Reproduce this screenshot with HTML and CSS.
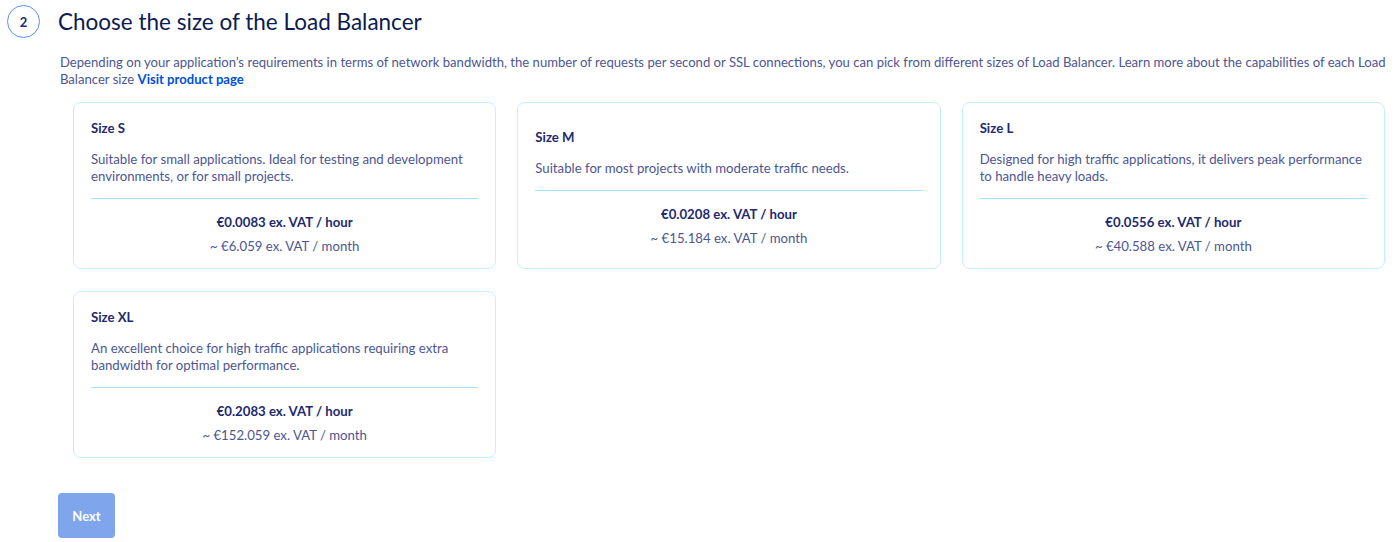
FILE: index.html
```html
<!DOCTYPE html>
<html lang="en">
<head>
    <meta charset="UTF-8">
    <meta name="viewport" content="width=device-width, initial-scale=1.0">
    <title>Choose the size of the Load Balancer</title>
    <link rel="stylesheet" href="styles.css">
</head>
<body>

    <div class="step">
        <div class="step-header">
            <span class="step-number">2</span>
            <h2>Choose the size of the Load Balancer</h2>
        </div>

        <div class="step-body">
            <p class="intro">
                Depending on your application’s requirements in terms of network bandwidth, the number of requests per second or SSL connections, you can pick from different sizes of Load Balancer. Learn more about the capabilities of each Load Balancer size <a href="#">Visit product page</a>
            </p>

            <div class="sizes">
                <div class="size-card">
                    <div class="size-name">Size S</div>
                    <div class="size-desc">Suitable for small applications. Ideal for testing and development environments, or for small projects.</div>
                    <div class="size-price">
                        <div class="price-hour">€0.0083 ex. VAT / hour</div>
                        <div class="price-month">~ €6.059 ex. VAT / month</div>
                    </div>
                </div>

                <div class="size-card">
                    <div class="size-name">Size M</div>
                    <div class="size-desc">Suitable for most projects with moderate traffic needs.</div>
                    <div class="size-price">
                        <div class="price-hour">€0.0208 ex. VAT / hour</div>
                        <div class="price-month">~ €15.184 ex. VAT / month</div>
                    </div>
                </div>

                <div class="size-card">
                    <div class="size-name">Size L</div>
                    <div class="size-desc">Designed for high traffic applications, it delivers peak performance to handle heavy loads.</div>
                    <div class="size-price">
                        <div class="price-hour">€0.0556 ex. VAT / hour</div>
                        <div class="price-month">~ €40.588 ex. VAT / month</div>
                    </div>
                </div>

                <div class="size-card">
                    <div class="size-name">Size XL</div>
                    <div class="size-desc">An excellent choice for high traffic applications requiring extra bandwidth for optimal performance.</div>
                    <div class="size-price">
                        <div class="price-hour">€0.2083 ex. VAT / hour</div>
                        <div class="price-month">~ €152.059 ex. VAT / month</div>
                    </div>
                </div>
            </div>

            <button type="button" class="next-btn" disabled>Next</button>
        </div>
    </div>

</body>
</html>
```

FILE: styles.css
```css
body {
    font-family: Lato, "Open Sans", sans-serif;
    margin: 0;
    color: #4d5693;
    background: #fff;
}

.step {
    padding: 5px 0 0 7px;
}

.step-header {
    display: flex;
    align-items: center;
    gap: 18px;
}

.step-number {
    width: 31px;
    height: 31px;
    border: 1px solid #5b8ee8;
    border-radius: 50%;
    display: flex;
    align-items: center;
    justify-content: center;
    font-size: 13px;
    font-weight: bold;
    color: #1e2a6e;
}

h2 {
    margin: 0;
    font-size: 22.5px;
    font-weight: normal;
    color: #0c1a52;
}

.step-body {
    padding-left: 51px;
}

.intro {
    margin: 16px 0 14px 2px;
    max-width: 1326px;
    font-size: 13.1px;
    line-height: 17px;
}

.intro a {
    color: #0050d7;
    font-weight: bold;
    text-decoration: none;
}

.sizes {
    display: grid;
    grid-template-columns: repeat(3, 1fr);
    column-gap: 21px;
    row-gap: 22px;
    width: 1312px;
    margin-left: 15px;
}

.size-card {
    border: 1px solid #c4f0fd;
    border-radius: 8px;
    padding: 17px 17px 13px;
    display: flex;
    flex-direction: column;
    justify-content: center;
    font-size: 13.2px;
}

.size-name {
    font-weight: bold;
    color: #1e2a6e;
    line-height: 16px;
}

.size-desc {
    margin-top: 15px;
    line-height: 17px;
    padding-bottom: 13px;
    border-bottom: 1px solid #a3e3f9;
}

.size-price {
    text-align: center;
    padding-top: 15px;
}

.price-hour {
    font-weight: bold;
    color: #1e2a6e;
    line-height: 17px;
}

.price-month {
    margin-top: 7px;
    line-height: 17px;
}

.next-btn {
    margin-top: 35px;
    width: 57px;
    height: 45px;
    background-color: #7fa6ec;
    color: white;
    border: none;
    border-radius: 4px;
    font-family: inherit;
    font-size: 13px;
    font-weight: bold;
}
```
